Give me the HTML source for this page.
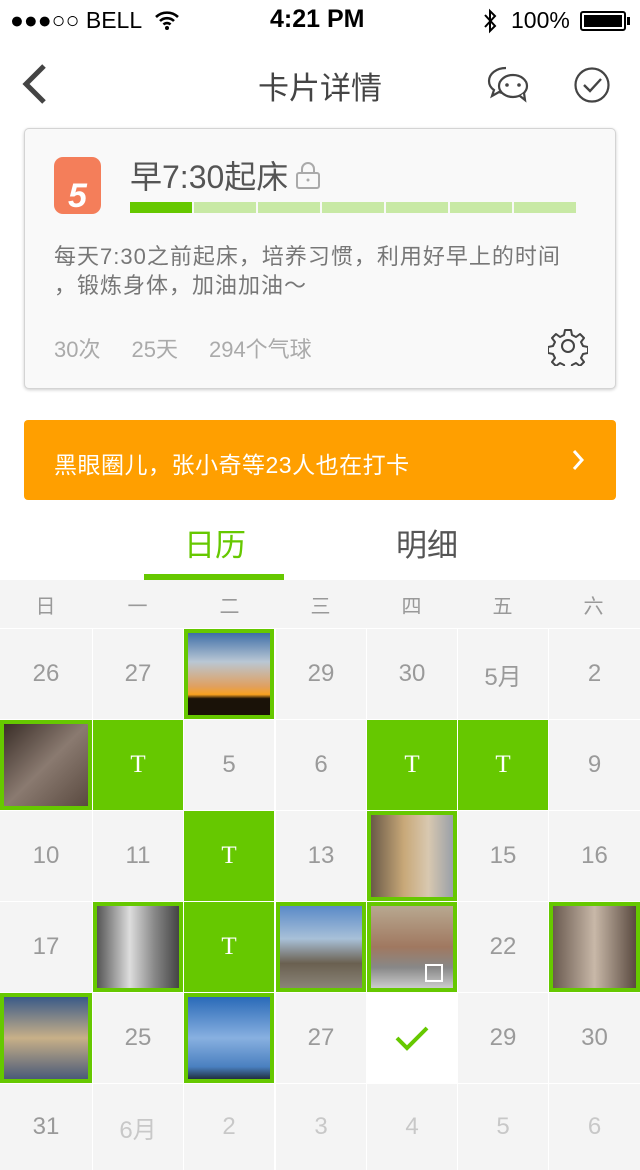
<!DOCTYPE html>
<html><head><meta charset="utf-8">
<style>
*{margin:0;padding:0;box-sizing:border-box}
body{width:640px;height:1170px;overflow:hidden;background:#fff;font-family:"Liberation Sans","Noto Sans CJK SC",sans-serif;position:relative}
.a{position:absolute}
.cell{position:absolute;width:90px;height:90px;background:#f4f4f4;color:#9a9a9a;font-size:24px;display:flex;align-items:center;justify-content:center}
.g{background:#66c800;color:#fff;font-family:"Liberation Serif",serif;font-size:25px}
.p{background:#66c800;padding:4px}
.p div{width:100%;height:100%}
.l{color:#c8c8c8}
.hd{position:absolute;top:580px;height:48px;width:91px;display:flex;align-items:center;justify-content:center;color:#999;font-size:20px}
</style></head><body>
<!-- status bar -->
<div class="a" style="left:10px;top:7px;font-size:23px;color:#000">●●●○○ BELL</div>
<svg class="a" style="left:154px;top:10px" width="26" height="20" viewBox="0 0 26 20"><path d="M2 7a16 16 0 0 1 22 0M6 11a10 10 0 0 1 14 0M9.5 14.5a5 5 0 0 1 7 0" stroke="#000" stroke-width="2.6" fill="none"/><circle cx="13" cy="18" r="2" fill="#000"/></svg>
<div class="a" style="left:270px;top:5px;font-size:25px;font-weight:bold;color:#000">4:21 PM</div>
<svg class="a" style="left:482px;top:8px" width="16" height="26" viewBox="0 0 16 26"><path d="M3 7l10 11-5 5V3l5 5L3 19" stroke="#000" stroke-width="2" fill="none"/></svg>
<div class="a" style="left:511px;top:7px;font-size:23px;color:#000">100%</div>
<div class="a" style="left:580px;top:11px;width:46px;height:20px;border:2px solid #000;border-radius:3px;padding:2px"><div style="background:#000;width:100%;height:100%"></div></div>
<div class="a" style="left:627px;top:17px;width:3px;height:8px;background:#000"></div>
<!-- nav -->
<svg class="a" style="left:18px;top:62px" width="30" height="44" viewBox="0 0 30 44"><path d="M26 4L8 22l18 18" stroke="#444" stroke-width="5" fill="none"/></svg>
<div class="a" style="left:0;width:640px;top:63px;text-align:center;font-size:31px;color:#444">卡片详情</div>
<svg class="a" style="left:486px;top:64px" width="44" height="40" viewBox="0 0 44 40"><path d="M20 4C10 4 3 10 3 17c0 4 2 7 5 9l-2 6 7-4c2 1 4 1 7 1" stroke="#444" stroke-width="2.2" fill="none"/><ellipse cx="27" cy="22" rx="14" ry="11" stroke="#444" stroke-width="2.2" fill="#fff"/><path d="M34 32l5 4-1-7" stroke="#444" stroke-width="2.2" fill="#fff"/><circle cx="21" cy="21" r="1.8" fill="#444"/><circle cx="33" cy="21" r="1.8" fill="#444"/></svg>
<svg class="a" style="left:572px;top:66px" width="40" height="38" viewBox="0 0 40 38"><circle cx="20" cy="19" r="16.5" stroke="#444" stroke-width="2.2" fill="none"/><path d="M12 19l6 6 11-12" stroke="#444" stroke-width="2.4" fill="none"/></svg>
<!-- card -->
<div class="a" style="left:24px;top:128px;width:592px;height:261px;background:#f9f9f9;border:1px solid #d4d4d4;border-radius:5px;box-shadow:0 1px 3px rgba(0,0,0,.2)"></div>
<div class="a" style="left:54px;top:157px;width:47px;height:57px;background:#f47e5a;border-radius:9px;color:#fff;font-weight:bold;font-style:italic;font-size:34px;text-align:center;line-height:78px">5</div>
<div class="a" style="left:130px;top:152px;font-size:32px;color:#555">早7:30起床</div>
<svg class="a" style="left:294px;top:160px" width="28" height="30" viewBox="0 0 28 30"><path d="M8 13V9a6 6 0 0 1 12 0v4" stroke="#aaa" stroke-width="2" fill="none"/><rect x="3" y="13" width="22" height="15" rx="2" stroke="#aaa" stroke-width="2" fill="none"/><circle cx="14" cy="20" r="1.5" fill="#aaa"/></svg>
<div class="a" style="left:130px;top:202px;width:62px;height:11px;background:#66c800"></div>
<div class="a" style="left:194px;top:202px;width:62px;height:11px;background:#c8e9a5"></div>
<div class="a" style="left:258px;top:202px;width:62px;height:11px;background:#c8e9a5"></div>
<div class="a" style="left:322px;top:202px;width:62px;height:11px;background:#c8e9a5"></div>
<div class="a" style="left:386px;top:202px;width:62px;height:11px;background:#c8e9a5"></div>
<div class="a" style="left:450px;top:202px;width:62px;height:11px;background:#c8e9a5"></div>
<div class="a" style="left:514px;top:202px;width:62px;height:11px;background:#c8e9a5"></div>
<div class="a" style="left:54px;top:242px;width:560px;font-size:22px;letter-spacing:1px;line-height:29px;color:#777;white-space:nowrap">每天7:30之前起床，培养习惯，利用好早上的时间<br>，锻炼身体，加油加油～</div>
<div class="a" style="left:54px;top:332px;font-size:22px;color:#aaa">30次<span style="margin-left:31px">25天</span><span style="margin-left:31px">294个气球</span></div>
<svg class="a" style="left:548px;top:326px" width="40" height="40" viewBox="0 0 40 40"><path d="M17 4h6l1 5 4 2 4-3 4 4-3 4 2 4 5 1v6l-5 1-2 4 3 4-4 4-4-3-4 2-1 5h-6l-1-5-4-2-4 3-4-4 3-4-2-4-5-1v-6l5-1 2-4-3-4 4-4 4 3 4-2z" stroke="#444" stroke-width="2" fill="none" stroke-linejoin="round"/><circle cx="20" cy="20" r="6" stroke="#444" stroke-width="2" fill="none"/></svg>
<!-- banner -->
<div class="a" style="left:24px;top:420px;width:592px;height:80px;background:#ff9f00;border-radius:4px"></div>
<div class="a" style="left:54px;top:446px;font-size:23px;letter-spacing:0.5px;color:#fff">黑眼圈儿，张小奇等23人也在打卡</div>
<svg class="a" style="left:570px;top:448px" width="16" height="24" viewBox="0 0 16 24"><path d="M4 3l8 9-8 9" stroke="#fff" stroke-width="3" fill="none"/></svg>
<!-- tabs -->
<div class="a" style="left:184px;top:520px;font-size:31px;color:#66c800">日历</div>
<div class="a" style="left:396px;top:520px;font-size:31px;color:#555">明细</div>
<div class="a" style="left:144px;top:574px;width:140px;height:6px;background:#66c800"></div>
<!-- calendar -->
<div class="a" style="left:0;top:580px;width:640px;height:590px;background:#fff"></div>
<div class="a" style="left:0;top:580px;width:640px;height:48px;background:#f4f4f4"></div>
<div class="hd" style="left:0">日</div><div class="hd" style="left:92px">一</div><div class="hd" style="left:184px">二</div><div class="hd" style="left:275px">三</div><div class="hd" style="left:366px">四</div><div class="hd" style="left:457px">五</div><div class="hd" style="left:548px">六</div>

<div class="cell" style="left:0;top:629px;width:92px">26</div>
<div class="cell" style="left:93px;top:629px">27</div>
<div class="cell p" style="left:184px;top:629px"><div style="background:linear-gradient(#3f6fa8,#b9c7d4 35%,#e0a060 65%,#f7a020 75%,#1a1208 80%)"></div></div>
<div class="cell" style="left:276px;top:629px">29</div>
<div class="cell" style="left:367px;top:629px">30</div>
<div class="cell" style="left:458px;top:629px">5月</div>
<div class="cell" style="left:549px;top:629px;width:91px">2</div>

<div class="cell p" style="left:0;top:720px;width:92px"><div style="background:linear-gradient(135deg,#3a2e28,#8a7a70 50%,#5a4a40)"></div></div>
<div class="cell g" style="left:93px;top:720px">T</div>
<div class="cell" style="left:184px;top:720px">5</div>
<div class="cell" style="left:276px;top:720px">6</div>
<div class="cell g" style="left:367px;top:720px">T</div>
<div class="cell g" style="left:458px;top:720px">T</div>
<div class="cell" style="left:549px;top:720px;width:91px">9</div>

<div class="cell" style="left:0;top:811px;width:92px">10</div>
<div class="cell" style="left:93px;top:811px">11</div>
<div class="cell g" style="left:184px;top:811px">T</div>
<div class="cell" style="left:276px;top:811px">13</div>
<div class="cell p" style="left:367px;top:811px"><div style="background:linear-gradient(90deg,#6a5a48,#c8a878 40%,#d8c8b0 70%,#9aa0a8)"></div></div>
<div class="cell" style="left:458px;top:811px">15</div>
<div class="cell" style="left:549px;top:811px;width:91px">16</div>

<div class="cell" style="left:0;top:902px;width:92px">17</div>
<div class="cell p" style="left:93px;top:902px"><div style="background:linear-gradient(90deg,#555,#ddd 40%,#888 70%,#444)"></div></div>
<div class="cell g" style="left:184px;top:902px">T</div>
<div class="cell p" style="left:276px;top:902px"><div style="background:linear-gradient(#5a8ac8,#a8c0d8 40%,#6a6050 70%,#8a8478)"></div></div>
<div class="cell p" style="left:367px;top:902px"><div style="background:linear-gradient(#b8a890,#a07860 50%,#888 75%,#ccc)"></div><div class="a" style="left:58px;top:62px;width:18px;height:18px;border:2px solid #fff"></div></div>
<div class="cell" style="left:458px;top:902px">22</div>
<div class="cell p" style="left:549px;top:902px;width:91px"><div style="background:linear-gradient(90deg,#6a5a50,#c8b8a8 50%,#5a4a40)"></div></div>

<div class="cell p" style="left:0;top:993px;width:92px"><div style="background:linear-gradient(#3a5a88,#c8b088 50%,#4a5a78)"></div></div>
<div class="cell" style="left:93px;top:993px">25</div>
<div class="cell p" style="left:184px;top:993px"><div style="background:linear-gradient(#2a6ab8,#88b0e0 50%,#4a80c0 85%,#203040)"></div></div>
<div class="cell" style="left:276px;top:993px">27</div>
<div class="cell" style="left:367px;top:993px;background:#fff"><svg width="36" height="28" viewBox="0 0 36 28"><path d="M3 14l10 10L33 4" stroke="#66c800" stroke-width="4" fill="none"/></svg></div>
<div class="cell" style="left:458px;top:993px">29</div>
<div class="cell" style="left:549px;top:993px;width:91px">30</div>

<div class="cell" style="left:0;top:1084px;width:92px;height:86px;color:#999">31</div>
<div class="cell l" style="left:93px;top:1084px;height:86px">6月</div>
<div class="cell l" style="left:184px;top:1084px;height:86px">2</div>
<div class="cell l" style="left:276px;top:1084px;height:86px">3</div>
<div class="cell l" style="left:367px;top:1084px;height:86px">4</div>
<div class="cell l" style="left:458px;top:1084px;height:86px">5</div>
<div class="cell l" style="left:549px;top:1084px;width:91px;height:86px">6</div>
</body></html>
